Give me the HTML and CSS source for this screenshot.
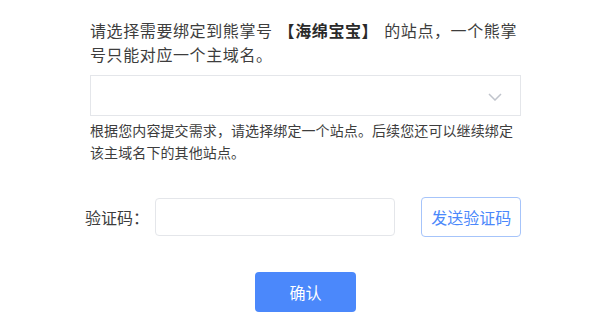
FILE: index.html
```html
<!DOCTYPE html>
<html lang="zh-CN">
<head>
    <meta charset="UTF-8">
    <meta name="viewport" content="width=device-width, initial-scale=1.0">
    <title>绑定站点</title>
    <link rel="stylesheet" href="styles.css">
</head>
<body>
    <div class="container">
        <p class="intro">请选择需要绑定到熊掌号<strong class="account">【海绵宝宝】</strong>的站点，一个熊掌号只能对应一个主域名。</p>
        <div class="select">
            <svg class="select-arrow" width="14" height="8" viewBox="0 0 14 8">
                <polyline points="1,1 7,7 13,1" fill="none" stroke="#c0c4cc" stroke-width="1.5"/>
            </svg>
        </div>
        <p class="hint">根据您内容提交需求，请选择绑定一个站点。后续您还可以继续绑定该主域名下的其他站点。</p>
        <div class="code-row">
            <label class="code-label" for="codeInput">验证码：</label>
            <input type="text" id="codeInput" class="code-input">
            <button type="button" class="send-btn">发送验证码</button>
        </div>
        <div class="actions">
            <button type="button" class="confirm-btn">确认</button>
        </div>
    </div>
</body>
</html>
```

FILE: styles.css
```css
:root {
    --text-color: #3d3d3d;
    --border-color: #e4e6ea;
    --primary: #4b88fb;
}
html, body {
    margin: 0;
    padding: 0;
    background: #ffffff;
}
body {
    font-family: "Noto Sans CJK SC", "Noto Sans", sans-serif;
    color: var(--text-color);
}
.container {
    width: 431px;
    margin: 0 auto;
    padding-top: 18px;
}
.intro {
    margin: 0;
    font-size: 16px;
    line-height: 24px;
    letter-spacing: 0.6px;
}
.account {
    display: inline-block;
    margin: 0 6px;
    color: #2a2a2a;
    font-weight: 700;
}
.select {
    margin-top: 9px;
    height: 41px;
    box-sizing: border-box;
    border: 1px solid var(--border-color);
    display: flex;
    justify-content: flex-end;
    align-items: center;
    padding-right: 18px;
}
.select-arrow {
    margin-top: 2px;
}
.hint {
    margin: 3px 0 0;
    font-size: 14px;
    line-height: 22px;
    letter-spacing: 0.1px;
}
.code-row {
    margin: 34px 0 0 -5px;
    display: flex;
    align-items: center;
}
.code-label {
    width: 70px;
    font-size: 16px;
}
.code-input {
    width: 242px;
    height: 38px;
    box-sizing: border-box;
    border: 1px solid var(--border-color);
    border-radius: 4px;
    outline: none;
    font-size: 14px;
}
.send-btn {
    margin-left: 26px;
    width: 100px;
    height: 40px;
    box-sizing: border-box;
    border: 1px solid #a6c4fa;
    border-radius: 4px;
    background: #ffffff;
    color: var(--primary);
    font-family: inherit;
    font-size: 16px;
    padding: 0;
    cursor: pointer;
}
.actions {
    margin-top: 35px;
    display: flex;
    justify-content: center;
}
.confirm-btn {
    width: 101px;
    height: 40px;
    border: none;
    border-radius: 4px;
    background: var(--primary);
    color: #ffffff;
    font-family: inherit;
    font-size: 16px;
    cursor: pointer;
}
```
